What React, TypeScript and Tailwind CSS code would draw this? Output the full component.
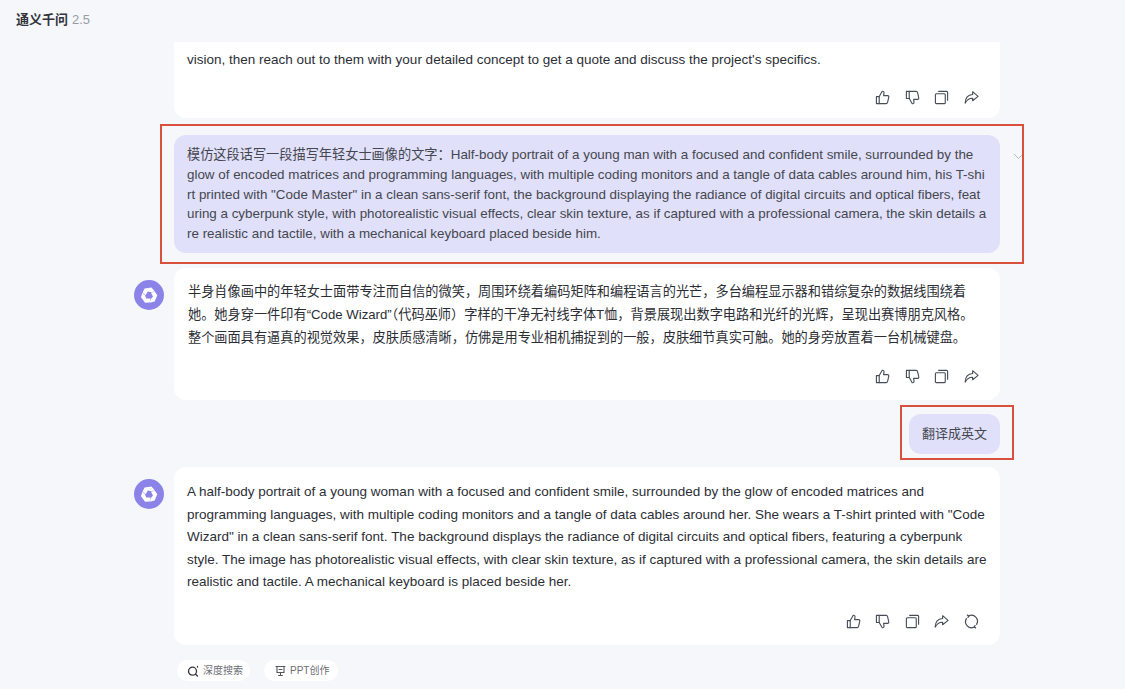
import React from 'react';

const fontStack = "font-['Liberation_Sans','Noto_Sans_CJK_SC',sans-serif]";

const IconThumbUp = ({ down = false }: { down?: boolean }) => (
  <svg width="15" height="15" viewBox="0 0 16 16" fill="none" stroke="#4a4d57" strokeWidth="1.2" strokeLinejoin="round" strokeLinecap="round" className={down ? 'rotate-180 -scale-x-100' : ''}>
    <path d="M1.5 7h3v7.5h-3z" />
    <path d="M4.5 7l3.2-5.6c1.2-.3 2 .5 1.9 1.6L9.2 6h4.4c.8 0 1.3.7 1.1 1.5l-1.3 5.8c-.2.7-.7 1.2-1.4 1.2H4.5" />
  </svg>
);

const IconCopy = () => (
  <svg width="15" height="15" viewBox="0 0 16 16" fill="none" stroke="#4a4d57" strokeWidth="1.2" strokeLinejoin="round">
    <rect x="1.5" y="4" width="10.5" height="10.5" rx="1" />
    <path d="M4.5 1.5h9a1 1 0 0 1 1 1v9" />
  </svg>
);

const IconShare = () => (
  <svg width="15" height="15" viewBox="0 0 16 16" fill="none" stroke="#4a4d57" strokeWidth="1.2" strokeLinejoin="round">
    <path d="M9.2 1.8l5.8 5-5.8 4.6V8.8C5.6 8.6 3.2 10.4 1.2 14c.2-5.2 3-8.8 8-9.2z" />
  </svg>
);

const IconRegenerate = () => (
  <svg width="15" height="15" viewBox="0 0 16 16" fill="none" stroke="#4a4d57" strokeWidth="1.3" strokeLinecap="round" strokeLinejoin="round">
    <path d="M5 2.2A6.3 6.3 0 0 1 13.4 11" />
    <path d="M11 13.8A6.3 6.3 0 0 1 2.6 5" />
    <path d="M3.6 1.2l1.5 1-.9 1.5" />
    <path d="M12.4 14.8l-1.5-1 .9-1.5" />
  </svg>
);

const Actions = ({ regenerate = false }: { regenerate?: boolean }) => (
  <div className="flex justify-end items-center gap-[14.6px] pr-[21px]">
    <IconThumbUp />
    <IconThumbUp down />
    <IconCopy />
    <IconShare />
    {regenerate && <IconRegenerate />}
  </div>
);

const Logo = () => (
  <div className="w-[30px] h-[30px] rounded-full bg-[#8b83e8] flex items-center justify-center shrink-0">
    <svg width="20" height="20" viewBox="0 0 20 20" fill="#fff">
      {[0, 120, 240].map((deg) => (
        <path key={deg} transform={`rotate(${deg} 10 10.5)`} d="M5.6 3.4L12.4 2.6 15.8 6.2 12.6 7.2 8.8 6.6 6.6 10.2 3.6 7.6z" />
      ))}
    </svg>
  </div>
);

const AnswerRow = ({ children, cardClass }: { children: React.ReactNode; cardClass: string }) => (
  <div className="flex gap-[10px] pl-[134px]">
    <div className="pt-[12px]">
      <Logo />
    </div>
    <div className={`w-[826px] bg-white rounded-[12px] ${cardClass}`}>{children}</div>
  </div>
);

const App: React.FC = () => {
  return (
    <div className={`relative w-[1125px] h-[689px] overflow-hidden bg-[#f5f7fb] text-[#2c2e35] ${fontStack}`}>
      {/* Header */}
      <div className="h-[42px] pl-4 pt-[12px] text-[13px] leading-[16px]">
        <span className="font-semibold text-[#33353c]">通义千问</span>
        <span className="ml-1 text-[#9a9ca5]">2.5</span>
      </div>

      {/* Chat column */}
      <div className="h-[647px] overflow-hidden">
        {/* First card, scrolled under the header */}
        <div className="ml-[174px] w-[826px] h-[76px] bg-white rounded-b-[12px]">
          <p className="pl-[13px] pt-[6px] text-[13.5px] leading-[23px] whitespace-nowrap">
            vision, then reach out to them with your detailed concept to get a quote and discuss the project's specifics.
          </p>
          <div className="pt-[19px]">
            <Actions />
          </div>
        </div>

        {/* User prompt */}
        <div className="relative mt-[17px] ml-[174px] w-[826px] h-[118px] rounded-[12px] bg-[#e0e0fa] px-[13px] pt-[10px] text-[13.4px] leading-[19.75px] text-[#45474f] whitespace-nowrap">
          <span className="text-[13.2px]">模仿这段话写一段描写年轻女士画像的文字：</span>Half-body portrait of a young man with a focused and confident smile, surrounded by the
          <br />
          glow of encoded matrices and programming languages, with multiple coding monitors and a tangle of data cables around him, his T-shi
          <br />
          rt printed with "Code Master" in a clean sans-serif font, the background displaying the radiance of digital circuits and optical fibers, feat
          <br />
          uring a cyberpunk style, with photorealistic visual effects, clear skin texture, as if captured with a professional camera, the skin details a
          <br />
          re realistic and tactile, with a mechanical keyboard placed beside him.
          <svg className="absolute left-[839px] top-[18px]" width="11" height="7" viewBox="0 0 11 7" fill="none" stroke="#b4b6c0" strokeWidth="1">
            <path d="M1 1l4.5 4.5L10 1" />
          </svg>
        </div>

        {/* Chinese answer */}
        <div className="mt-[15px]">
          <AnswerRow cardClass="h-[132px]">
            <p className="pl-[14px] pt-[12px] text-[13.2px] leading-[23px] whitespace-nowrap">
              半身肖像画中的年轻女士面带专注而自信的微笑，周围环绕着编码矩阵和编程语言的光芒，多台编程显示器和错综复杂的数据线围绕着
              <br />
              她。她身穿一件印有“Code Wizard”（代码巫师）字样的干净无衬线字体T恤，背景展现出数字电路和光纤的光辉，呈现出赛博朋克风格。
              <br />
              整个画面具有逼真的视觉效果，皮肤质感清晰，仿佛是用专业相机捕捉到的一般，皮肤细节真实可触。她的身旁放置着一台机械键盘。
            </p>
            <div className="pt-[20px]">
              <Actions />
            </div>
          </AnswerRow>
        </div>

        {/* User follow up */}
        <div className="flex justify-end mt-[14px] pr-[125px]">
          <div className="h-[40px] px-[13px] flex items-center rounded-[12px] bg-[#e0e0fa] text-[13px] text-[#45474f]">翻译成英文</div>
        </div>

        {/* English answer */}
        <div className="mt-[13px]">
          <AnswerRow cardClass="h-[178px]">
            <p className="pl-[13px] pt-[14px] text-[13.5px] leading-[22.6px] whitespace-nowrap">
              A half-body portrait of a young woman with a focused and confident smile, surrounded by the glow of encoded matrices and
              <br />
              programming languages, with multiple coding monitors and a tangle of data cables around her. She wears a T-shirt printed with "Code
              <br />
              Wizard" in a clean sans-serif font. The background displays the radiance of digital circuits and optical fibers, featuring a cyberpunk
              <br />
              style. The image has photorealistic visual effects, with clear skin texture, as if captured with a professional camera, the skin details are
              <br />
              realistic and tactile. A mechanical keyboard is placed beside her.
            </p>
            <div className="pt-[20px]">
              <Actions regenerate />
            </div>
          </AnswerRow>
        </div>

        {/* Quick actions */}
        <div className="flex gap-[14px] ml-[177px] mt-[15px]">
          <div className="h-[21px] w-[73px] pl-[10px] flex items-center gap-[4px] rounded-full bg-white text-[10px] text-[#6b6d75]">
            <svg width="12" height="12" viewBox="0 0 12 12" fill="none" stroke="#33353c" strokeWidth="1.3" strokeLinecap="round">
              <circle cx="5.5" cy="6.2" r="4" />
              <path d="M8.5 9.2l2 1.8M10.5 1.5v.5" />
            </svg>
            深度搜索
          </div>
          <div className="h-[21px] w-[74px] pl-[11px] flex items-center gap-[4px] rounded-full bg-white text-[10px] text-[#6b6d75]">
            <svg width="11" height="12" viewBox="0 0 11 12" fill="none" stroke="#55575f" strokeWidth="1.1" strokeLinecap="round">
              <path d="M1 1.5h9M2 1.5v6h7v-6M5.5 7.5v2M3.5 10.5h4M4 4.5h3" />
            </svg>
            PPT创作
          </div>
        </div>
      </div>

      {/* Red annotation boxes */}
      <div className="absolute left-[160px] top-[124px] w-[864px] h-[140px] border-2 border-[#d9503c]" />
      <div className="absolute left-[900px] top-[405px] w-[114px] h-[55px] border-2 border-[#d9503c]" />
    </div>
  );
};

export default App;
